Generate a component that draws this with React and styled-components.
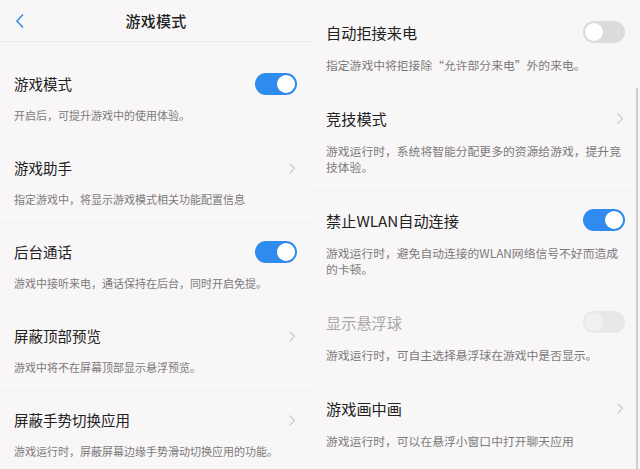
import React from 'react'
import styled, { createGlobalStyle } from 'styled-components'

const GlobalStyle = createGlobalStyle`
  html, body {
    margin: 0;
    padding: 0;
    background: #f8f6f7;
    font-family: 'Noto Sans CJK SC', 'Noto Sans', sans-serif;
  }
  #root {
    height: 469px;
    overflow: hidden;
  }
`

const leftItems = [
  { title: '游戏模式', desc: '开启后，可提升游戏中的使用体验。', control: 'on' },
  { title: '游戏助手', desc: '指定游戏中，将显示游戏模式相关功能配置信息', control: 'arrow' },
  { title: '后台通话', desc: '游戏中接听来电，通话保持在后台，同时开启免提。', control: 'on' },
  { title: '屏蔽顶部预览', desc: '游戏中将不在屏幕顶部显示悬浮预览。', control: 'arrow' },
  { title: '屏蔽手势切换应用', desc: '游戏运行时，屏蔽屏幕边缘手势滑动切换应用的功能。', control: 'arrow' },
]

const rightItems = [
  { title: '自动拒接来电', desc: '指定游戏中将拒接除“允许部分来电”外的来电。', control: 'off' },
  { title: '竞技模式', desc: '游戏运行时，系统将智能分配更多的资源给游戏，提升竞技体验。', control: 'arrow' },
  { title: '禁止WLAN自动连接', desc: '游戏运行时，避免自动连接的WLAN网络信号不好而造成的卡顿。', control: 'on' },
  { title: '显示悬浮球', desc: '游戏运行时，可自主选择悬浮球在游戏中是否显示。', control: 'disabled', dim: true },
  { title: '游戏画中画', desc: '游戏运行时，可以在悬浮小窗口中打开聊天应用', control: 'arrow' },
]

function Chevron() {
  return (
    <ArrowIcon width='8' height='13' viewBox='0 0 8 13'>
      <path d='M1.5 1.5 L6.5 6.5 L1.5 11.5' fill='none' stroke='#cfcccd' strokeWidth='1.3' />
    </ArrowIcon>
  )
}

function Control({ type }) {
  if (type === 'arrow') return <Chevron />
  return (
    <Switch state={type}>
      <Knob state={type} />
    </Switch>
  )
}

function SettingsList({ items, big }) {
  return (
    <List>
      {items.map((item, i) => (
        <Row key={i} big={big}>
          <RowHead>
            <Title big={big} dim={item.dim}>{item.title}</Title>
            <Control type={item.control} />
          </RowHead>
          <Desc big={big}>{item.desc}</Desc>
        </Row>
      ))}
    </List>
  )
}

export default function App() {
  return (
    <>
      <GlobalStyle />
      <Screen>
        <LeftPanel>
          <Header>
            <BackButton width='10' height='16' viewBox='0 0 10 16'>
              <path d='M8 1.5 L2 8 L8 14.5' fill='none' stroke='#3a8ee6' strokeWidth='1.6' />
            </BackButton>
            <HeaderTitle>游戏模式</HeaderTitle>
          </Header>
          <SettingsList items={leftItems} />
        </LeftPanel>
        <RightPanel>
          <SettingsList items={rightItems} big />
          <ScrollBar />
        </RightPanel>
      </Screen>
    </>
  )
}

const Screen = styled.div`
  display: flex;
  width: 640px;
  height: 469px;
  overflow: hidden;
`
const LeftPanel = styled.section`
  width: 312px;
  flex-shrink: 0;
  display: flex;
  flex-direction: column;
  gap: 14px;
  & > * {
    flex-shrink: 0;
  }
`
const RightPanel = styled.section`
  flex: 1;
  position: relative;
  padding-top: 4px;
`
const Header = styled.header`
  position: relative;
  height: 41px;
  display: flex;
  align-items: center;
  justify-content: center;
  border-bottom: 1px solid #ecebec;
`
const BackButton = styled.svg`
  position: absolute;
  left: 15px;
  top: 13px;
`
const HeaderTitle = styled.h1`
  margin: 0;
  font-size: 15px;
  font-weight: 500;
  color: #222;
  letter-spacing: 0.3px;
`
const List = styled.div`
  display: flex;
  flex-direction: column;
`
const Row = styled.div`
  padding: 16px 15px 16px 14px;
  display: flex;
  flex-direction: column;
  gap: ${(p) => (p.big ? '13px' : '11px')};
  border-bottom: 1px solid #f3f1f2;
  &:last-child {
    border-bottom: none;
  }
`
const RowHead = styled.div`
  display: flex;
  align-items: center;
  justify-content: space-between;
  height: 24px;
`
const Title = styled.span`
  font-size: ${(p) => (p.big ? '15.2px' : '14.5px')};
  line-height: 24px;
  color: ${(p) => (p.dim ? '#aaa8a9' : '#222')};
`
const Desc = styled.p`
  margin: 0;
  font-size: ${(p) => (p.big ? '11.8px' : '11px')};
  line-height: 16px;
  color: #7c7a7b;
`
const ArrowIcon = styled.svg`
  margin-right: 1px;
`
const Switch = styled.div`
  width: 42px;
  height: 22px;
  border-radius: 11px;
  box-sizing: border-box;
  padding: 2px;
  display: flex;
  justify-content: ${(p) => (p.state === 'on' ? 'flex-end' : 'flex-start')};
  background: ${(p) =>
    p.state === 'on' ? '#2f8bee' : p.state === 'off' ? '#dcdadb' : '#e9e7e8'};
`
const Knob = styled.div`
  width: 18px;
  height: 18px;
  border-radius: 50%;
  background: ${(p) => (p.state === 'disabled' ? '#f1f0f0' : '#fff')};
`
const ScrollBar = styled.div`
  position: absolute;
  right: 2px;
  top: 88px;
  bottom: 0;
  width: 2px;
  background: #cfcdce;
`
